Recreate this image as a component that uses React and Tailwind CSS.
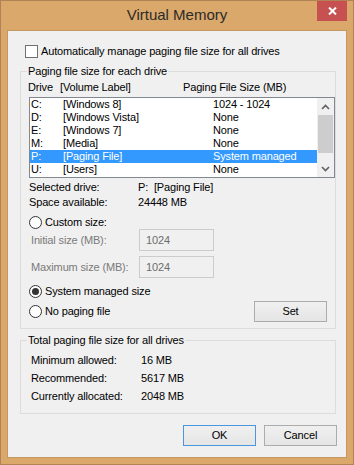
import React from 'react';

const drives = [
    ['C:', '[Windows 8]', '1024 - 1024'],
    ['D:', '[Windows Vista]', 'None'],
    ['E:', '[Windows 7]', 'None'],
    ['M:', '[Media]', 'None'],
    ['P:', '[Paging File]', 'System managed'],
    ['U:', '[Users]', 'None'],
];

function Radio({ checked }) {
    return (
        <span className="flex h-[13px] w-[13px] shrink-0 items-center justify-center rounded-full border border-[#333333] bg-white">
            {checked && <span className="h-[7px] w-[7px] rounded-full bg-[#333333]" />}
        </span>
    );
}

function Button({ children, primary }) {
    return (
        <button
            className={
                primary
                    ? 'flex h-[21px] w-[73px] items-center justify-center border border-[#4a97e0] bg-linear-to-b from-[#f0f0f0] to-[#e5e5e5] text-black'
                    : 'flex h-[21px] w-[73px] items-center justify-center border border-[#acacac] bg-linear-to-b from-[#f0f0f0] to-[#e5e5e5] text-black'
            }
        >
            {children}
        </button>
    );
}

function Chevron({ down }) {
    return (
        <svg width="9" height="6" viewBox="0 0 9 6" className="text-[#606060]">
            <polyline
                points={down ? '1,1 4.5,4.5 8,1' : '1,5 4.5,1.5 8,5'}
                fill="none"
                stroke="currentColor"
                strokeWidth="1.6"
            />
        </svg>
    );
}

export default function App() {
    return (
        <div className="flex h-[465px] w-[354px] flex-col border border-[#b08355] bg-[#daa86a] font-['Liberation_Sans',Arial,sans-serif] text-[11px] tracking-[-0.15px] text-black">
            {/* title bar */}
            <div className="relative flex h-[29px] shrink-0 items-center justify-center">
                <span className="text-[15px] tracking-normal text-[#2b2b2b]">Virtual Memory</span>
                <button className="absolute right-[6px] top-0 flex h-[20px] w-[30px] items-center justify-center bg-[#c75050]">
                    <svg width="9" height="8" viewBox="0 0 9 8">
                        <path d="M1 0.5 L8 7.5 M8 0.5 L1 7.5" stroke="white" strokeWidth="2" />
                    </svg>
                </button>
            </div>

            {/* client area */}
            <div className="mx-[6px] mb-[6px] flex flex-1 flex-col border border-[#c4985f] bg-[#f0f0f0]">
                <label className="ml-[17px] mt-[14px] flex h-[13px] items-center gap-[3px] leading-[13px]">
                    <span className="h-[13px] w-[13px] shrink-0 border border-[#707070] bg-white" />
                    Automatically manage paging file size for all drives
                </label>

                {/* per drive */}
                <fieldset className="ml-[12px] mt-[6px] w-[316px] border border-[#dcdcdc] pb-[6px]">
                    <legend className="ml-[6px] px-[1px] leading-[15px]">Paging file size for each drive</legend>

                    <div className="mt-[1px] grid grid-cols-[32px_123px_1fr] pl-[7px] leading-[15px]">
                        <span>Drive</span>
                        <span>[Volume Label]</span>
                        <span>Paging File Size (MB)</span>
                    </div>

                    <div className="ml-[8px] mt-[2px] flex h-[81px] w-[306px] border border-[#828790] bg-white">
                        <div className="flex w-[287px] flex-col">
                            {drives.map(([drive, label, size]) => {
                                const selected = drive === 'P:';
                                return (
                                    <div
                                        key={drive}
                                        className={
                                            selected
                                                ? 'grid h-[13px] grid-cols-[32px_150px_1fr] bg-[#3399ff] pl-[1px] leading-[13px] text-white'
                                                : 'grid h-[13px] grid-cols-[32px_150px_1fr] pl-[1px] leading-[13px]'
                                        }
                                    >
                                        <span>{drive}</span>
                                        <span>{label}</span>
                                        <span>{size}</span>
                                    </div>
                                );
                            })}
                        </div>
                        <div className="flex w-[17px] flex-col bg-[#f0f0f0]">
                            <div className="flex h-[17px] items-center justify-center">
                                <Chevron />
                            </div>
                            <div className="ml-[1px] h-[38px] w-[15px] bg-[#cdcdcd]" />
                            <div className="flex-1" />
                            <div className="flex h-[17px] items-center justify-center">
                                <Chevron down />
                            </div>
                        </div>
                    </div>

                    <div className="ml-[8px] mt-[2px] grid grid-cols-[109px_1fr] leading-[15px]">
                        <span>Selected drive:</span>
                        <span>P:&nbsp;&nbsp;[Paging File]</span>
                        <span>Space available:</span>
                        <span>24448 MB</span>
                    </div>

                    <label className="ml-[8px] mt-[6px] flex h-[13px] items-center gap-[3px]">
                        <Radio />
                        Custom size:
                    </label>

                    <div className="ml-[10px] flex h-[22px] items-center text-[#7a7a7a]">
                        <span className="w-[108px]">Initial size (MB):</span>
                        <span className="flex h-[22px] w-[75px] items-center border border-[#cccccc] pl-[6px] text-[#6d6d6d]">1024</span>
                    </div>
                    <div className="ml-[10px] mt-[5px] flex h-[22px] items-center text-[#7a7a7a]">
                        <span className="w-[108px]">Maximum size (MB):</span>
                        <span className="flex h-[22px] w-[75px] items-center border border-[#cccccc] pl-[6px] text-[#6d6d6d]">1024</span>
                    </div>

                    <label className="ml-[8px] mt-[7px] flex h-[13px] items-center gap-[3px]">
                        <Radio checked />
                        System managed size
                    </label>

                    <div className="ml-[8px] mr-[8px] mt-[3px] flex h-[21px] items-center justify-between">
                        <label className="flex items-center gap-[3px]">
                            <Radio />
                            No paging file
                        </label>
                        <Button>Set</Button>
                    </div>
                </fieldset>

                {/* totals */}
                <fieldset className="ml-[12px] mt-[4px] w-[316px] border border-[#dcdcdc] pb-[8px]">
                    <legend className="ml-[6px] px-[1px] leading-[15px]">Total paging file size for all drives</legend>
                    <div className="ml-[10px] mt-[3px] grid grid-cols-[110px_1fr] leading-[18px]">
                        <span>Minimum allowed:</span>
                        <span>16 MB</span>
                        <span>Recommended:</span>
                        <span>5617 MB</span>
                        <span>Currently allocated:</span>
                        <span>2048 MB</span>
                    </div>
                </fieldset>

                <div className="mr-[9px] mt-[11px] flex justify-end gap-[8px]">
                    <Button primary>OK</Button>
                    <Button>Cancel</Button>
                </div>
            </div>
        </div>
    );
}
